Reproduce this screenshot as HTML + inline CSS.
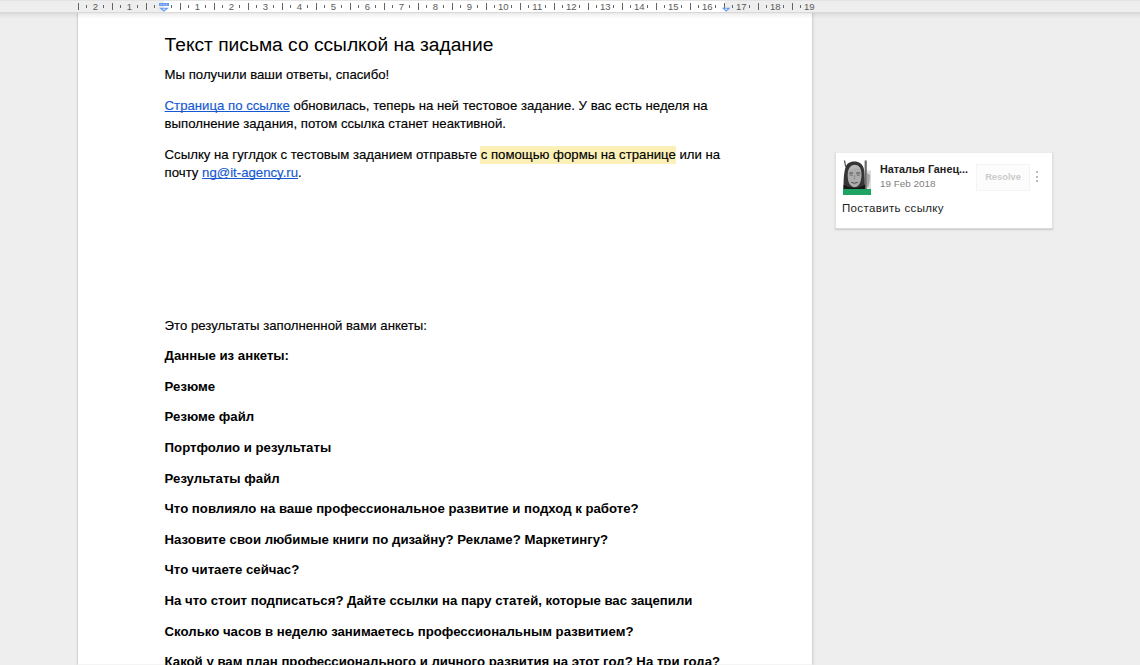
<!DOCTYPE html>
<html><head><meta charset="utf-8">
<style>
*{margin:0;padding:0;box-sizing:border-box}
html,body{width:1140px;height:665px;overflow:hidden;background:#eeeeee;font-family:"Liberation Sans",sans-serif}
#ruler{position:absolute;left:0;top:0;width:1140px;height:13px;background:#eeeeee;border-top:1px solid #e3e3e3;border-bottom:1px solid #d9d9d9}
#rwhite{position:absolute;left:164px;top:0;width:561px;height:11px;background:#fff}
#ruler i{position:absolute;display:block;width:1px;background:#646464}
#ruler i.mj{top:2px;height:7px}
#ruler i.mn{top:4px;height:3px}
#ruler .rn{position:absolute;top:0px;width:20px;text-align:center;font-size:9.5px;line-height:11px;color:#5a5a5a}
#page{position:absolute;left:77px;top:13px;width:736px;height:652px;background:#fff;border-left:1px solid #d4d4d4;border-right:1px solid #d4d4d4;border-bottom:1px solid #f4f4f4}
#pshadow{position:absolute;left:0;top:13px;width:1140px;height:6px;background:linear-gradient(rgba(0,0,0,.085),rgba(0,0,0,.03) 50%,rgba(0,0,0,0))}
#lshadow{position:absolute;left:75px;top:13px;width:2px;height:652px;background:linear-gradient(270deg,rgba(0,0,0,.04),rgba(0,0,0,0))}
#rshadow{position:absolute;left:813px;top:13px;width:3px;height:652px;background:linear-gradient(90deg,rgba(0,0,0,.05),rgba(0,0,0,0))}
.t{position:absolute;left:164.6px;white-space:nowrap;color:#000;font-size:13.2px;line-height:18.3px;-webkit-text-stroke:0.15px #000}
.b{font-weight:bold;-webkit-text-stroke:0}
a{color:#1558d2;-webkit-text-stroke-color:#1558d2;text-decoration:underline;text-decoration-skip-ink:none}
.hl{background:#fbf0b7;padding:1px 0 2px 1px;margin-left:-1px}
#title{font-size:19.2px;line-height:24px;-webkit-text-stroke:0}
#card{position:absolute;left:835px;top:152px;width:218px;height:77px;background:#fff;border:1px solid #e2e2e2;border-top-color:#ebebeb;border-bottom-color:#d9d9d9;box-shadow:0 1px 1.5px rgba(0,0,0,.16)}
#ava{position:absolute;left:7px;top:7px;width:28px;height:35px}
#name{position:absolute;left:44px;top:10px;font-size:10.8px;line-height:13px;font-weight:bold;color:#222;white-space:nowrap}
#date{position:absolute;left:44px;top:25px;font-size:9.9px;line-height:12px;color:#808080;white-space:nowrap}
#resolve{position:absolute;left:140px;top:11px;width:54px;height:27px;border:1px solid #f4f4f4;background:#fcfcfc;font-size:9.3px;font-weight:bold;color:#cbcbcb;text-align:center;line-height:24px}
#dots{position:absolute;left:200px;top:18px;width:2px}
#dots b{display:block;width:2px;height:2px;background:#bababa;margin-bottom:2.5px}
#ctext{position:absolute;left:6px;top:49px;letter-spacing:.35px;font-size:11.5px;line-height:13px;color:#222;white-space:nowrap}
</style></head><body>
<div id="ruler"><div id="rwhite"></div>
<i class="mj" style="left:78px"></i>
<i class="mn" style="left:86px"></i>
<span class="rn" style="left:85.30px">2</span>
<i class="mn" style="left:103px"></i>
<i class="mj" style="left:112px"></i>
<i class="mn" style="left:120px"></i>
<span class="rn" style="left:119.30px">1</span>
<i class="mn" style="left:137px"></i>
<i class="mj" style="left:146px"></i>
<i class="mn" style="left:154px"></i>
<i class="mn" style="left:171px"></i>
<i class="mj" style="left:180px"></i>
<i class="mn" style="left:188px"></i>
<span class="rn" style="left:187.30px">1</span>
<i class="mn" style="left:205px"></i>
<i class="mj" style="left:214px"></i>
<i class="mn" style="left:222px"></i>
<span class="rn" style="left:221.30px">2</span>
<i class="mn" style="left:239px"></i>
<i class="mj" style="left:248px"></i>
<i class="mn" style="left:256px"></i>
<span class="rn" style="left:255.30px">3</span>
<i class="mn" style="left:273px"></i>
<i class="mj" style="left:282px"></i>
<i class="mn" style="left:290px"></i>
<span class="rn" style="left:289.30px">4</span>
<i class="mn" style="left:307px"></i>
<i class="mj" style="left:316px"></i>
<i class="mn" style="left:324px"></i>
<span class="rn" style="left:323.30px">5</span>
<i class="mn" style="left:341px"></i>
<i class="mj" style="left:350px"></i>
<i class="mn" style="left:358px"></i>
<span class="rn" style="left:357.30px">6</span>
<i class="mn" style="left:375px"></i>
<i class="mj" style="left:384px"></i>
<i class="mn" style="left:392px"></i>
<span class="rn" style="left:391.30px">7</span>
<i class="mn" style="left:409px"></i>
<i class="mj" style="left:418px"></i>
<i class="mn" style="left:426px"></i>
<span class="rn" style="left:425.30px">8</span>
<i class="mn" style="left:443px"></i>
<i class="mj" style="left:452px"></i>
<i class="mn" style="left:460px"></i>
<span class="rn" style="left:459.30px">9</span>
<i class="mn" style="left:477px"></i>
<i class="mj" style="left:486px"></i>
<i class="mn" style="left:494px"></i>
<span class="rn" style="left:493.30px">10</span>
<i class="mn" style="left:511px"></i>
<i class="mj" style="left:520px"></i>
<i class="mn" style="left:528px"></i>
<span class="rn" style="left:527.30px">11</span>
<i class="mn" style="left:545px"></i>
<i class="mj" style="left:554px"></i>
<i class="mn" style="left:562px"></i>
<span class="rn" style="left:561.30px">12</span>
<i class="mn" style="left:579px"></i>
<i class="mj" style="left:588px"></i>
<i class="mn" style="left:596px"></i>
<span class="rn" style="left:595.30px">13</span>
<i class="mn" style="left:613px"></i>
<i class="mj" style="left:622px"></i>
<i class="mn" style="left:630px"></i>
<span class="rn" style="left:629.30px">14</span>
<i class="mn" style="left:647px"></i>
<i class="mj" style="left:656px"></i>
<i class="mn" style="left:664px"></i>
<span class="rn" style="left:663.30px">15</span>
<i class="mn" style="left:681px"></i>
<i class="mj" style="left:690px"></i>
<i class="mn" style="left:698px"></i>
<span class="rn" style="left:697.30px">16</span>
<i class="mn" style="left:715px"></i>
<i class="mj" style="left:724px"></i>
<i class="mn" style="left:732px"></i>
<span class="rn" style="left:731.30px">17</span>
<i class="mn" style="left:749px"></i>
<i class="mj" style="left:758px"></i>
<i class="mn" style="left:766px"></i>
<span class="rn" style="left:765.30px">18</span>
<i class="mn" style="left:783px"></i>
<i class="mj" style="left:792px"></i>
<i class="mn" style="left:800px"></i>
<span class="rn" style="left:799.30px">19</span>
<svg style="position:absolute;left:159px;top:2px" width="10" height="10" viewBox="0 0 10 10"><rect x="0" y="0" width="10" height="3" fill="#6b9ef0"/><rect x="1.5" y="1.2" width="1" height="1" fill="#c9dbf8"/><rect x="4.5" y="1.2" width="1" height="1" fill="#c9dbf8"/><rect x="7" y="1.2" width="1" height="1" fill="#c9dbf8"/><path d="M0 4.8H10L5 8.8Z" fill="#6b9ef0"/><circle cx="5" cy="6.2" r=".8" fill="#fff"/></svg>
<svg style="position:absolute;left:721px;top:5px" width="10" height="6" viewBox="0 0 10 6"><path d="M0.8 1.8H9.6L5.2 5.8Z" fill="#6b9ef0"/><circle cx="5.2" cy="3.2" r=".8" fill="#fff"/></svg>
</div>
<div id="page"></div>
<div id="pshadow"></div>
<div id="rshadow"></div>
<div id="lshadow"></div>
<div class="t" id="title" style="top:33px">Текст письма со ссылкой на задание</div>
<div class="t" style="top:66px">Мы получили ваши ответы, спасибо!</div>
<div class="t" style="top:97px"><a>Страница по ссылке</a> обновилась, теперь на ней тестовое задание. У вас есть неделя на<br>выполнение задания, потом ссылка станет неактивной.</div>
<div class="t" style="top:146px">Ссылку на гуглдок с тестовым заданием отправьте <span class="hl">с помощью формы на странице</span> или на<br>почту <a>ng@it-agency.ru</a>.</div>
<div class="t" style="top:317px">Это результаты заполненной вами анкеты:</div>
<div class="t b" style="top:347px">Данные из анкеты:</div>
<div class="t b" style="top:378px">Резюме</div>
<div class="t b" style="top:408px">Резюме файл</div>
<div class="t b" style="top:439px">Портфолио и результаты</div>
<div class="t b" style="top:470px">Результаты файл</div>
<div class="t b" style="top:500px">Что повлияло на ваше профессиональное развитие и подход к работе?</div>
<div class="t b" style="top:531px">Назовите свои любимые книги по дизайну? Рекламе? Маркетингу?</div>
<div class="t b" style="top:561px">Что читаете сейчас?</div>
<div class="t b" style="top:592px">На что стоит подписаться? Дайте ссылки на пару статей, которые вас зацепили</div>
<div class="t b" style="top:623px">Сколько часов в неделю занимаетесь профессиональным развитием?</div>
<div class="t b" style="top:653px">Какой у вам план профессионального и личного развития на этот год? На три года?</div>
<div id="card">
<svg id="ava" width="28" height="35" viewBox="0 0 28 35">
<defs><filter id="bl" x="-10%" y="-10%" width="120%" height="120%"><feGaussianBlur stdDeviation="0.35"/></filter></defs>
<rect width="28" height="35" fill="#fff"/>
<g filter="url(#bl)">
<path d="M0.8 0.5L2.2 0.5L3.2 6.5L2.2 7Z" fill="#555"/>
<rect x="23.6" y="10.5" width="4.4" height="18.5" fill="#dcdcdc"/>
<path d="M24 13L27 15L26.5 22L25 27L24 27Z" fill="#a5a5a5"/>
<rect x="21.6" y="0.5" width="2.2" height="28.5" fill="#6a6a6a"/>
<path d="M0.5 29C0.5 20 1 12 2.5 7.5C4 3 7.5 1.6 11.5 1.6C16 1.6 19.5 4 20.8 8.5C21.8 13 21.6 22 22 29Z" fill="#343434"/>
<path d="M11.8 4.8C16.5 4.8 18.6 9 18.5 15C18.4 22 15.8 27.2 11.6 27.2C7.3 27.2 4.8 22.5 4.7 16C4.6 9 7.2 4.8 11.8 4.8Z" fill="#acacac"/>
<path d="M7 7.5C8.5 5.8 10.5 5.2 12.5 5.3C15 5.5 16.6 7 17.3 9.5C15.5 8.5 13.5 8.3 11.5 8.5C9.5 8.8 8 10 6.8 11Z" fill="#b8b8b8"/>
<path d="M6.2 13.3Q8 12.3 10 13.2M13.2 13.2Q15.2 12.3 17.2 13.3" stroke="#3d3d3d" stroke-width="0.9" fill="none"/>
<path d="M6.8 15.2Q8.2 14.6 9.6 15.2M13.8 15.2Q15.2 14.6 16.6 15.2" stroke="#555" stroke-width="0.9" fill="none"/>
<path d="M11.6 15V19.5" stroke="#888" stroke-width="0.9"/>
<path d="M8.3 22.3Q11.5 24.2 14.8 22.3" stroke="#4a4a4a" stroke-width="1" fill="none"/>
<path d="M0.5 29V25C3 26 6 27.8 11.5 27.8C17 27.8 19.5 26 22 24.5V29Z" fill="#141414"/>
</g>
<rect x="0" y="29" width="28" height="6" fill="#1ea362"/>
</svg>
<div id="name">Наталья Ганец...</div>
<div id="date">19 Feb 2018</div>
<div id="resolve">Resolve</div>
<div id="dots"><b></b><b></b><b></b></div>
<div id="ctext">Поставить ссылку</div>
</div>
</body></html>
